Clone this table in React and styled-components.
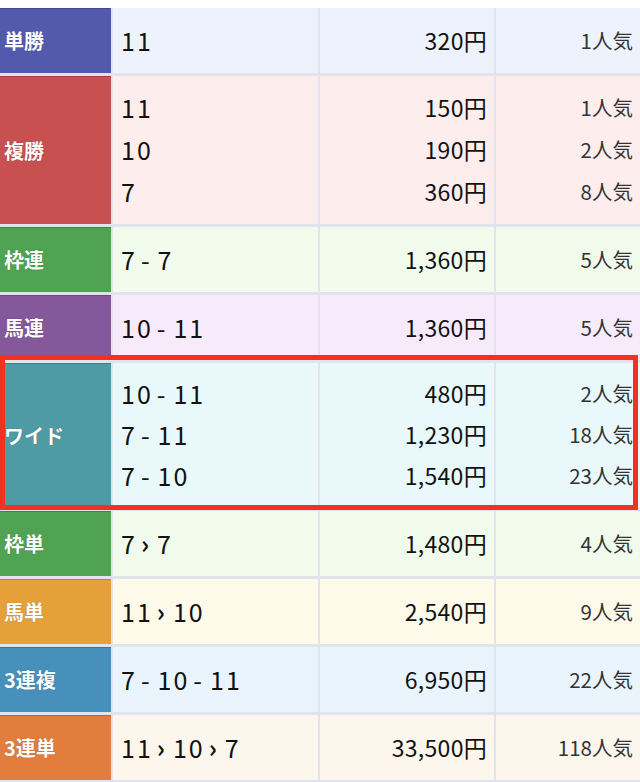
import { styled, createGlobalStyle } from "styled-components";

const GlobalStyle = createGlobalStyle`
  html, body {
    margin: 0;
    padding: 0;
    background: #ffffff;
  }
  body {
    font-family: "Noto Sans CJK JP", "Noto Sans", sans-serif;
    color: #1a1a1a;
  }
`;

// combos are split on their separators so the gaps can be styled
const results = [
  { label: "単勝", color: "#5359ad", bg: "#edf2fc", lines: [["11", "320円", "1人気"]] },
  {
    label: "複勝",
    color: "#c85050",
    bg: "#fdeded",
    lines: [
      ["11", "150円", "1人気"],
      ["10", "190円", "2人気"],
      ["7", "360円", "8人気"],
    ],
  },
  { label: "枠連", color: "#4fa352", bg: "#f1fbec", lines: [["7-7", "1,360円", "5人気"]] },
  { label: "馬連", color: "#85579b", bg: "#f7ebfb", lines: [["10-11", "1,360円", "5人気"]] },
  {
    label: "ワイド",
    color: "#4e9ba5",
    bg: "#e9f8fb",
    highlight: true,
    lines: [
      ["10-11", "480円", "2人気"],
      ["7-11", "1,230円", "18人気"],
      ["7-10", "1,540円", "23人気"],
    ],
  },
  { label: "枠単", color: "#4fa352", bg: "#f1fbec", lines: [["7>7", "1,480円", "4人気"]] },
  { label: "馬単", color: "#e5a03a", bg: "#fefaea", lines: [["11>10", "2,540円", "9人気"]] },
  { label: "3連複", color: "#4690bb", bg: "#eaf4fd", lines: [["7-10-11", "6,950円", "22人気"]] },
  { label: "3連単", color: "#e27d3d", bg: "#fdf6ec", lines: [["11>10>7", "33,500円", "118人気"]] },
];

const Page = styled.div`
  padding-top: 8px;
  background: #ffffff;
`;

const Table = styled.div`
  display: flex;
  flex-direction: column;
  gap: 3px;
  background: #e1e4ec;
  padding-bottom: 2px;
`;

const Row = styled.div`
  position: relative;
  display: grid;
  grid-template-columns: 111px 205px 174px 1fr;
  column-gap: 2px;
  min-height: ${(props) => (props.$multi ? (props.$highlight ? "145px" : "148px") : "65px")};
`;

const Label = styled.div`
  display: flex;
  align-items: center;
  padding-left: 4px;
  background: ${(props) => props.$color};
  box-shadow: inset 0 1px 0 rgba(0, 0, 0, 0.18);
  color: #ffffff;
  font-size: 20px;
  font-weight: 700;
  text-shadow: 0 0 1px rgba(0, 0, 0, 0.35);
`;

const Cell = styled.div`
  display: flex;
  flex-direction: column;
  justify-content: center;
  align-items: ${(props) => (props.$right ? "flex-end" : "flex-start")};
  padding: 0 ${(props) => (props.$right ? "7px" : "0")} 2px ${(props) => (props.$right ? "0" : "8px")};
  background: ${(props) => props.$bg};
`;

const Combo = styled.span`
  display: flex;
  align-items: center;
  font-size: 25px;
  line-height: ${(props) => props.$lh};
  letter-spacing: 2px;
  color: #111;
`;

const Sep = styled.span`
  margin: 0 6px 0 4px;
  font-weight: ${(props) => (props.$arrow ? 700 : 400)};
`;

const Payout = styled.span`
  font-size: 23px;
  line-height: ${(props) => props.$lh};
  letter-spacing: 0.3px;
  color: #111;
`;

const Popularity = styled.span`
  font-size: 20.5px;
  font-weight: 400;
  line-height: ${(props) => props.$lh};
  color: #333;
`;

const Highlight = styled.div`
  position: absolute;
  top: -8px;
  left: 0;
  right: 2px;
  bottom: -2px;
  border: 5px solid #f3311f;
  pointer-events: none;
`;

function ComboText({ value, lh }) {
  const parts = value.split(/([->])/);
  return (
    <Combo $lh={lh}>
      {parts.map((p, i) =>
        p === "-" ? (
          <Sep key={i}>-</Sep>
        ) : p === ">" ? (
          <Sep key={i} $arrow>›</Sep>
        ) : (
          <span key={i}>{p}</span>
        )
      )}
    </Combo>
  );
}

function ResultRow({ item }) {
  const multi = item.lines.length > 1;
  const lh = item.highlight ? "41px" : "42px";
  return (
    <Row $multi={multi} $highlight={item.highlight}>
      <Label $color={item.color}>{item.label}</Label>
      <Cell $bg={item.bg}>
        {item.lines.map((l, i) => (
          <ComboText key={i} value={l[0]} lh={lh} />
        ))}
      </Cell>
      <Cell $bg={item.bg} $right>
        {item.lines.map((l, i) => (
          <Payout key={i} $lh={lh}>{l[1]}</Payout>
        ))}
      </Cell>
      <Cell $bg={item.bg} $right>
        {item.lines.map((l, i) => (
          <Popularity key={i} $lh={lh}>{l[2]}</Popularity>
        ))}
      </Cell>
      {item.highlight && <Highlight />}
    </Row>
  );
}

export default function App() {
  return (
    <>
      <GlobalStyle />
      <Page>
        <Table>
          {results.map((item) => (
            <ResultRow key={item.label} item={item} />
          ))}
        </Table>
      </Page>
    </>
  );
}
